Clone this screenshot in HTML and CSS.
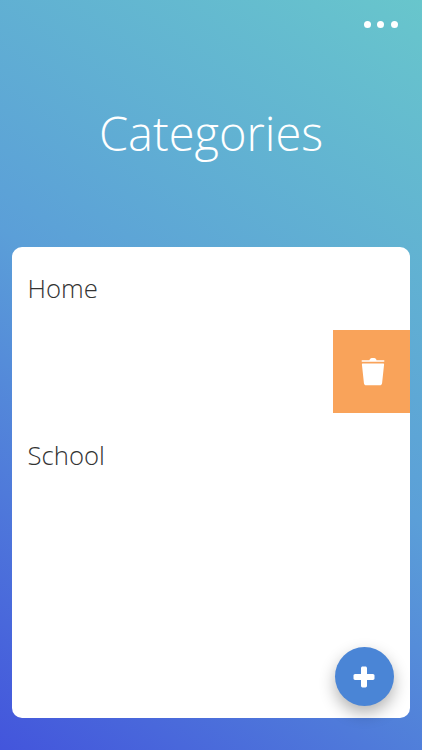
FILE: index.html
```html
<!DOCTYPE html>
<html lang="en">
<head>
  <meta charset="UTF-8" />
  <title>Categories</title>
  <link rel="stylesheet" href="styles.css">
</head>
<body>

  <!-- top bar -->
  <div class="topbar">
    <div class="dots"><span></span><span></span><span></span></div>
  </div>

  <h1>Categories</h1>

  <!-- category list -->
  <div class="card">
    <div class="row">
      <div class="label">Home</div>
      <div class="delete">
        <svg width="24" height="30" viewBox="0 0 24 30">
          <path fill="#fff" d="M8.5 3.2C8.8 1.400 10 1 12 1s3.200.4 3.500 2.200H22.600c.6 0 .9.3.9.8s-.3.8-.9.8H1.400c-.6 0-.9-.3-.9-.8s.3-.8.9-.8z"/>
          <path fill="#fff" d="M1.600 6.400h20.800c.5 0 .8.3.7.9l-2 18.600c-.2 1.500-1 2.300-2.400 2.300H5.300c-1.400 0-2.200-.8-2.400-2.300L.9 7.300c-.1-.6.2-.9.7-.9z"/>
        </svg>
      </div>
    </div>
    <div class="row">
      <div class="label">School</div>
    </div>

    <button class="fab">
      <svg width="22" height="22" viewBox="0 0 22 22">
        <path fill="#fff" d="M8 2.200C8 1 8.800.5 9.500.5h3c.7 0 1.500.5 1.500 1.700V8h5.800c1.200 0 1.700.8 1.700 1.500v3c0 .7-.5 1.500-1.700 1.500H14v5.800c0 1.200-.8 1.700-1.500 1.700h-3c-.7 0-1.500-.5-1.500-1.700V14H2.200C1 14 .5 13.200.5 12.500v-3C.5 8.800 1 8 2.200 8H8z"/>
      </svg>
    </button>
  </div>

</body>
</html>
```

FILE: styles.css
```css
* {
  box-sizing: border-box;
}

body {
  margin: 0;
  height: 750px;
  overflow: hidden;
  padding: 0 12px 32px;
  font-family: "Open Sans", sans-serif;
  font-weight: 300;
  background: linear-gradient(215deg, #68c6cc 0%, #5b9fd8 50%, #4355dc 100%);
  display: flex;
  flex-direction: column;
}

.topbar {
  height: 48px;
  padding-right: 12.500px;
  display: flex;
  justify-content: flex-end;
  align-items: center;
}

.dots {
  display: flex;
  gap: 6.500px;
}

.dots span {
  width: 7px;
  height: 7px;
  border-radius: 50%;
  background: white;
}

h1 {
  margin: 48px 0 0;
  height: 151px;
  color: white;
  font-size: 47px;
  font-weight: 300;
  line-height: 74px;
  text-align: center;
}

.card {
  position: relative;
  flex: 1;
  background: white;
  border-radius: 10px;
}

.row {
  height: 167px;
  display: flex;
  flex-direction: column;
}

.label {
  height: 83px;
  padding-left: 15.500px;
  color: #333;
  font-size: 25.700px;
  line-height: 83px;
}

.delete {
  width: 77px;
  height: 83px;
  padding-left: 2px;
  align-self: flex-end;
  background: #f9a35a;
  display: flex;
  justify-content: center;
  align-items: center;
}

.fab {
  position: absolute;
  right: 16px;
  bottom: 12px;
  width: 59px;
  height: 59px;
  padding: 0 2px 0 0;
  border: none;
  border-radius: 50%;
  background: #4a85d6;
  box-shadow: 0 7px 16px rgba(0,0,0,.3);
  display: flex;
  justify-content: center;
  align-items: center;
}
```
